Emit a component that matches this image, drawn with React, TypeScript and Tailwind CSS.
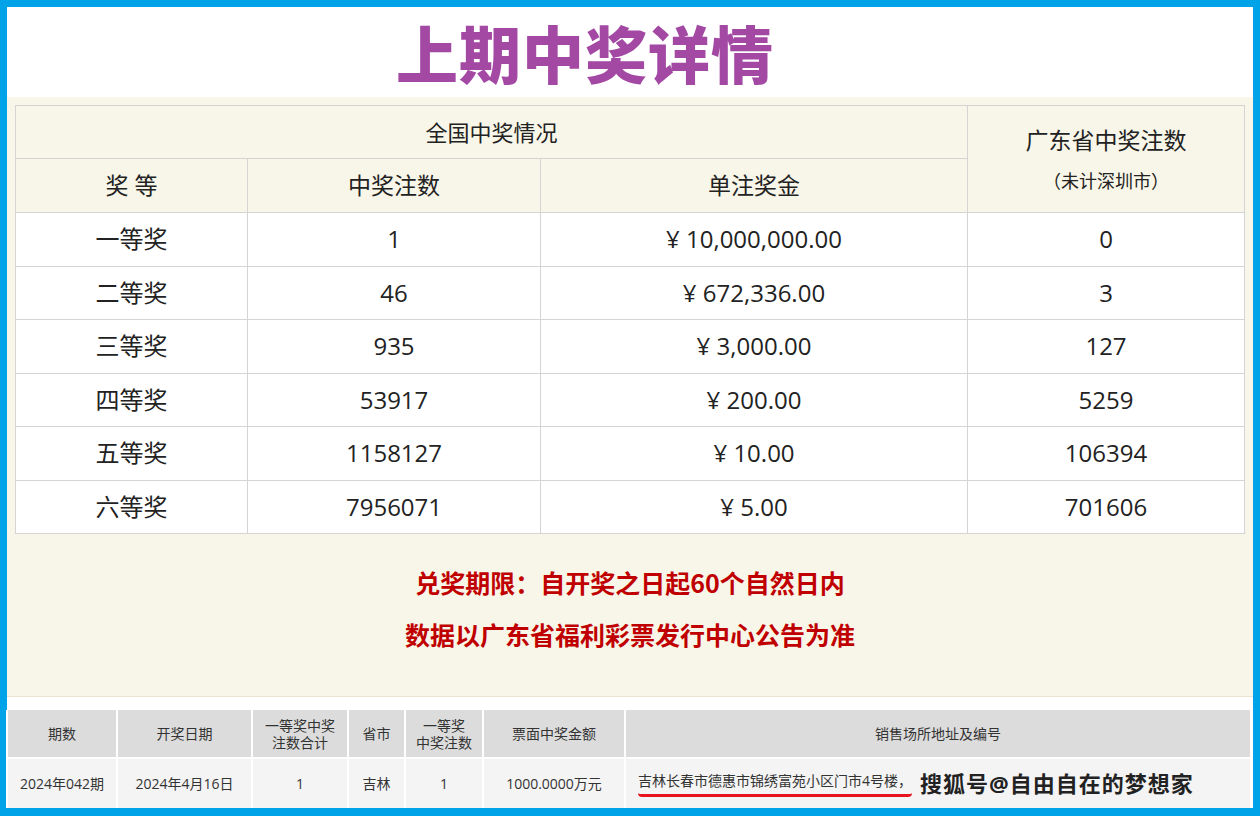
export default function App() {
  const rows = [
    ["一等奖", "1", "¥ 10,000,000.00", "0"],
    ["二等奖", "46", "¥ 672,336.00", "3"],
    ["三等奖", "935", "¥ 3,000.00", "127"],
    ["四等奖", "53917", "¥ 200.00", "5259"],
    ["五等奖", "1158127", "¥ 10.00", "106394"],
    ["六等奖", "7956071", "¥ 5.00", "701606"],
  ];
  const f = { fontFamily: '"Open Sans","Noto Sans CJK SC",sans-serif' };
  const c = "border border-[#d4d4d4] text-center";
  return (
    <div className="w-[1260px] h-[816px] bg-[#00a2e8] p-[7px] pb-[8px]" style={f}>
      <div className="w-full h-full bg-white flex flex-col">
        <div className="h-[90px] flex items-center justify-center pr-[90px]">
          <span className="text-[62px] font-black text-[#a349a4] tracking-[1px] leading-none" style={{ fontFamily: '"Noto Sans CJK SC",sans-serif' }}>上期中奖详情</span>
        </div>
        <div className="bg-[#f8f6e8] h-[600px] px-[8px] pt-[8px] border-b border-[#e8e4d0]">
          <table className="w-full border-collapse text-[#222]">
            <colgroup>
              <col className="w-[232px]" /><col className="w-[293px]" /><col className="w-[427px]" /><col />
            </colgroup>
            <tbody>
              <tr className="h-[53px] text-[22px]">
                <td colSpan={3} className={c}>全国中奖情况</td>
                <td rowSpan={2} className={c}>
                  <div className="text-[23px]">广东省中奖注数</div>
                  <div className="text-[18px] mt-[10px]">（未计深圳市）</div>
                </td>
              </tr>
              <tr className="h-[54px] text-[23px]">
                <td className={c}>奖 等</td><td className={c}>中奖注数</td><td className={c}>单注奖金</td>
              </tr>
              {rows.map((r) => (
                <tr key={r[0]} className="h-[53.5px] bg-white text-[24px]">
                  {r.map((v, i) => <td key={i} className={c}>{v}</td>)}
                </tr>
              ))}
            </tbody>
          </table>
          <div className="text-center text-[#c00000] font-bold text-[25px] mt-[22px] leading-[52px]" style={{ fontFamily: '"Noto Sans CJK SC",sans-serif' }}>
            <div>兑奖期限：自开奖之日起60个自然日内</div>
            <div>数据以广东省福利彩票发行中心公告为准</div>
          </div>
        </div>
        <div className="h-[13px]" />
        <table className="w-full border-collapse text-[14px] text-[#333] flex-1 -ml-[1px]">
          <colgroup>
            <col className="w-[110px]" /><col className="w-[135px]" /><col className="w-[96px]" /><col className="w-[57px]" /><col className="w-[78px]" /><col className="w-[142px]" /><col />
          </colgroup>
          <tbody>
            <tr className="h-[48px] bg-[#dcdcdc] leading-[17px]">
              {["期数", "开奖日期", "一等奖中奖\n注数合计", "省市", "一等奖\n中奖注数", "票面中奖金额", "销售场所地址及编号"].map((t) => (
                <td key={t} className="border-x-2 border-white text-center whitespace-pre-line">{t}</td>
              ))}
            </tr>
            <tr className="bg-[#f4f4f4] border-t-2 border-white">
              {["2024年042期", "2024年4月16日", "1", "吉林", "1", "1000.0000万元"].map((t, i) => (
                <td key={i} className="border-x-2 border-white text-center">{t}</td>
              ))}
              <td className="border-x-2 border-white pl-[12px]">
                <div className="flex items-center">
                  <span className="border-b-[3px] border-[#e8141e] pb-[3px] rounded-sm">吉林长春市德惠市锦绣富苑小区门市4号楼，</span>
                  <span className="ml-[8px] text-[22px] font-bold text-[#222] tracking-[1px]">搜狐号@自由自在的梦想家</span>
                </div>
              </td>
            </tr>
          </tbody>
        </table>
      </div>
    </div>
  );
}
